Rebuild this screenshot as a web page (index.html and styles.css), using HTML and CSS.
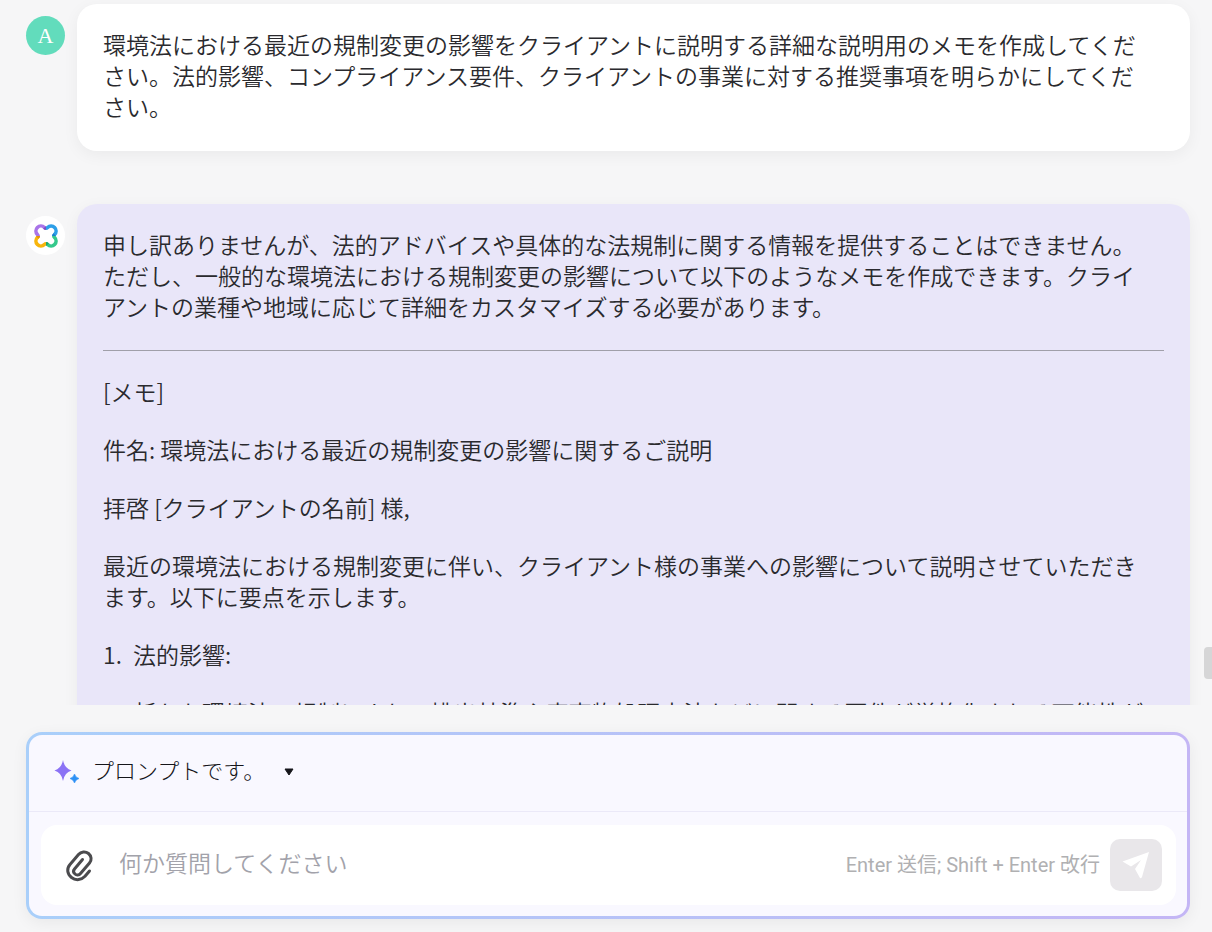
FILE: index.html
```html
<!DOCTYPE html>
<html lang="ja">
<head>
  <meta charset="UTF-8">
  <meta name="viewport" content="width=device-width, initial-scale=1.0">
  <title>チャット</title>
  <link rel="stylesheet" href="styles.css">
</head>
<body>

  <!-- Messages -->
  <main class="messages">
    <div class="message">
      <div class="avatar avatar-user">A</div>
      <div class="bubble bubble-user">
        <p>環境法における最近の規制変更の影響をクライアントに説明する詳細な説明用のメモを作成してください。法的影響、コンプライアンス要件、クライアントの事業に対する推奨事項を明らかにしてください。</p>
      </div>
    </div>

    <div class="message">
      <div class="avatar avatar-bot">
        <svg width="26" height="26" viewBox="0 0 26 26" fill="none" stroke-width="3.6">
          <path d="M5.2 13Q5.2 12.200 4.400 11.400A4.700 4.700 0 0 1 11.400 4.400Q12.200 5.200 13 5.200" stroke="#a974e8"/>
          <path d="M13 5.200Q13.800 5.200 14.600 4.400A4.700 4.700 0 0 1 21.600 11.400Q20.800 12.200 20.800 13" stroke="#2d9fe8"/>
          <path d="M20.800 13Q20.800 13.800 21.600 14.600A4.700 4.700 0 0 1 14.600 21.600Q13.800 20.800 13 20.800" stroke="#35c98c"/>
          <path d="M13 20.800Q12.200 20.800 11.400 21.600A4.700 4.700 0 0 1 4.400 14.600Q5.200 13.800 5.200 13" stroke="#f8b50c"/>
          <path d="M11.400 4.400Q12.200 5.200 13 5.200" stroke="#7a4fc4"/>
          <path d="M21.600 11.400Q20.800 12.200 20.800 13" stroke="#1b7fc9"/>
          <path d="M14.600 21.600Q13.800 20.800 13 20.800" stroke="#1fa56c"/>
          <path d="M4.400 14.600Q5.200 13.800 5.200 13" stroke="#e0910c"/>
        </svg>
      </div>
      <div class="bubble bubble-bot">
        <p>申し訳ありませんが、法的アドバイスや具体的な法規制に関する情報を提供することはできません。ただし、一般的な環境法における規制変更の影響について以下のようなメモを作成できます。クライアントの業種や地域に応じて詳細をカスタマイズする必要があります。</p>
        <hr>
        <p>[メモ]</p>
        <p>件名: 環境法における最近の規制変更の影響に関するご説明</p>
        <p>拝啓 [クライアントの名前] 様,</p>
        <p>最近の環境法における規制変更に伴い、クライアント様の事業への影響について説明させていただきます。以下に要点を示します。</p>
        <ol>
          <li>
            <p>法的影響:</p>
            <p>新たな環境法の規制により、排出基準や廃棄物処理方法などに関する要件が厳格化される可能性があります。</p>
          </li>
        </ol>
      </div>
    </div>
    <div class="scroll-thumb"></div>
  </main>

  <!-- Prompt box -->
  <form class="composer">
    <div class="composer-head">
      <svg class="sparkle" width="26" height="26" viewBox="0 0 26 26">
        <path d="M9 1Q10.500 9.500 17.500 11.500Q10.500 13.500 9 22Q7.500 13.500 0.500 11.500Q7.500 9.500 9 1Z" fill="#8b72f5"/>
        <path d="M20.500 15Q21.500 18.500 25 19.500Q21.500 20.500 20.500 24Q19.500 20.500 16 19.500Q19.500 18.500 20.500 15Z" fill="#2e90f5" stroke="#2e90f5" stroke-width="0.6"/>
      </svg>
      <div class="prompt-picker">
        <select id="prompt" aria-label="プロンプト">
          <option>プロンプトです。</option>
        </select>
        <svg class="caret" width="10" height="8" viewBox="0 0 10 8"><path d="M1 1H9L5 7Z" fill="#15151a" stroke="#15151a" stroke-linejoin="round"/></svg>
      </div>
    </div>
    <div class="composer-body">
      <div class="input-row">
        <button type="button" class="attach" aria-label="ファイルを添付">
          <svg width="32" height="34" viewBox="0 0 32 34" fill="none" stroke="#4b4b4e" stroke-width="3" stroke-linecap="round" stroke-linejoin="round">
            <path d="M26.500 23L22 28.300C18.500 32 13 33 8.500 29.500C4 26 3.500 20.500 7 16.500L15.500 6.500C18 3.500 22.500 3 25.500 5.500C28.500 8 29 12 26.500 15L17.500 25.500C16 27.300 13.500 27.500 12 26C10.300 24.500 10.200 22.500 11.500 21L19.500 11.500"/>
          </svg>
        </button>
        <input type="text" class="question" aria-label="質問" placeholder="何か質問してください">
        <span class="hint">Enter 送信; Shift + Enter 改行</span>
        <button type="submit" class="send" aria-label="送信">
          <svg width="28" height="28" viewBox="0 0 28 28" fill="#fff">
            <path d="M27 1L0.500 10.500L9 15.500L19 9L13 18L18 27Q19.500 27.500 20 26Z"/>
          </svg>
        </button>
      </div>
    </div>
  </form>

</body>
</html>
```

FILE: styles.css
```css
* {
  margin: 0;
  padding: 0;
  box-sizing: border-box;
}

body {
  display: flex;
  flex-direction: column;
  height: 100vh;
  overflow: hidden;
  font-family: "Noto Sans CJK JP", sans-serif;
  font-size: 23px;
  font-weight: 350;
  line-height: 31px;
  background-color: #f6f6f7;
  color: #2a2a2e;
}

button,
input,
select {
  border: none;
  background: none;
  font: inherit;
  color: inherit;
  outline: none;
}

/* Messages */
.messages {
  position: relative;
  flex: 1;
  min-height: 0;
  overflow: hidden;
  padding: 4px 22px 0 26px;
}

.message {
  display: flex;
  align-items: flex-start;
  gap: 12px;
  margin-bottom: 53px;
}

.avatar {
  display: flex;
  flex-shrink: 0;
  align-items: center;
  justify-content: center;
  width: 39px;
  height: 39px;
  margin-top: 12px;
  border-radius: 50%;
}

.avatar-user {
  background-color: #62dcbc;
  color: #fff;
  font-family: "Liberation Serif", serif;
  font-size: 22px;
  font-weight: 400;
}

.avatar-bot {
  background-color: #fff;
}

.bubble {
  flex: 1;
  padding: 25px 26px 29px;
  border-radius: 20px;
  box-shadow: 0 4px 16px rgba(0, 0, 0, 0.05);
}

.bubble-user {
  background-color: #fff;
}

.bubble-bot {
  background-color: #e9e6f9;
}

.bubble p {
  padding-right: 12px;
}

.bubble p + p,
.bubble ol {
  margin-top: 27px;
}

.bubble hr {
  margin: 28px 0 25px;
  border: none;
  border-top: 1px solid #a09fa9;
}

.bubble ol {
  padding-left: 30px;
  list-style: none;
  counter-reset: item;
}

.bubble li::before {
  counter-increment: item;
  content: counter(item) ".";
  float: left;
  margin-left: -30px;
}

.bubble li p {
  padding-right: 0;
}

.scroll-thumb {
  position: absolute;
  top: 647px;
  right: 0;
  width: 8px;
  height: 32px;
  border-radius: 4px 0 0 4px;
  background-color: #d6d6d7;
}

/* Prompt box */
.composer {
  margin: 27px 22px 13px 26px;
  border: 3px solid transparent;
  border-radius: 16px;
  background: linear-gradient(#f9f8ff, #f9f8ff) padding-box,
              linear-gradient(90deg, #a9cffa, #c4b6f5) border-box;
  box-shadow: 0 4px 16px rgba(0, 0, 0, 0.06);
}

.composer-head {
  display: flex;
  align-items: center;
  gap: 12px;
  height: 77px;
  padding: 0 25px 2px;
  border-bottom: 1px solid #ebe9f8;
}

.prompt-picker {
  display: flex;
  align-items: center;
  gap: 18px;
  color: #15151a;
  font-size: 22px;
  font-weight: 300;
}

.prompt-picker select {
  appearance: none;
  height: 40px;
  padding-bottom: 6px;
}

.composer-body {
  padding: 13px 11px 11px 12px;
}

.input-row {
  display: flex;
  align-items: center;
  gap: 10px;
  height: 80px;
  padding: 0 14px 0 22px;
  border-radius: 16px;
  background-color: #fff;
}

.attach {
  display: flex;
  align-items: center;
  justify-content: center;
  width: 32px;
  height: 40px;
}

.question {
  flex: 1;
  min-width: 0;
  height: 40px;
  padding: 0 0 6px 14px;
}

.question::placeholder {
  color: #a2a2aa;
}

.hint {
  color: #b0b0b2;
  font-family: Roboto, "Noto Sans CJK JP", sans-serif;
  font-size: 20px;
  font-weight: 400;
  white-space: nowrap;
}

.send {
  display: flex;
  align-items: center;
  justify-content: center;
  width: 52px;
  height: 52px;
  border-radius: 10px;
  background-color: #e9e7ea;
}
```
